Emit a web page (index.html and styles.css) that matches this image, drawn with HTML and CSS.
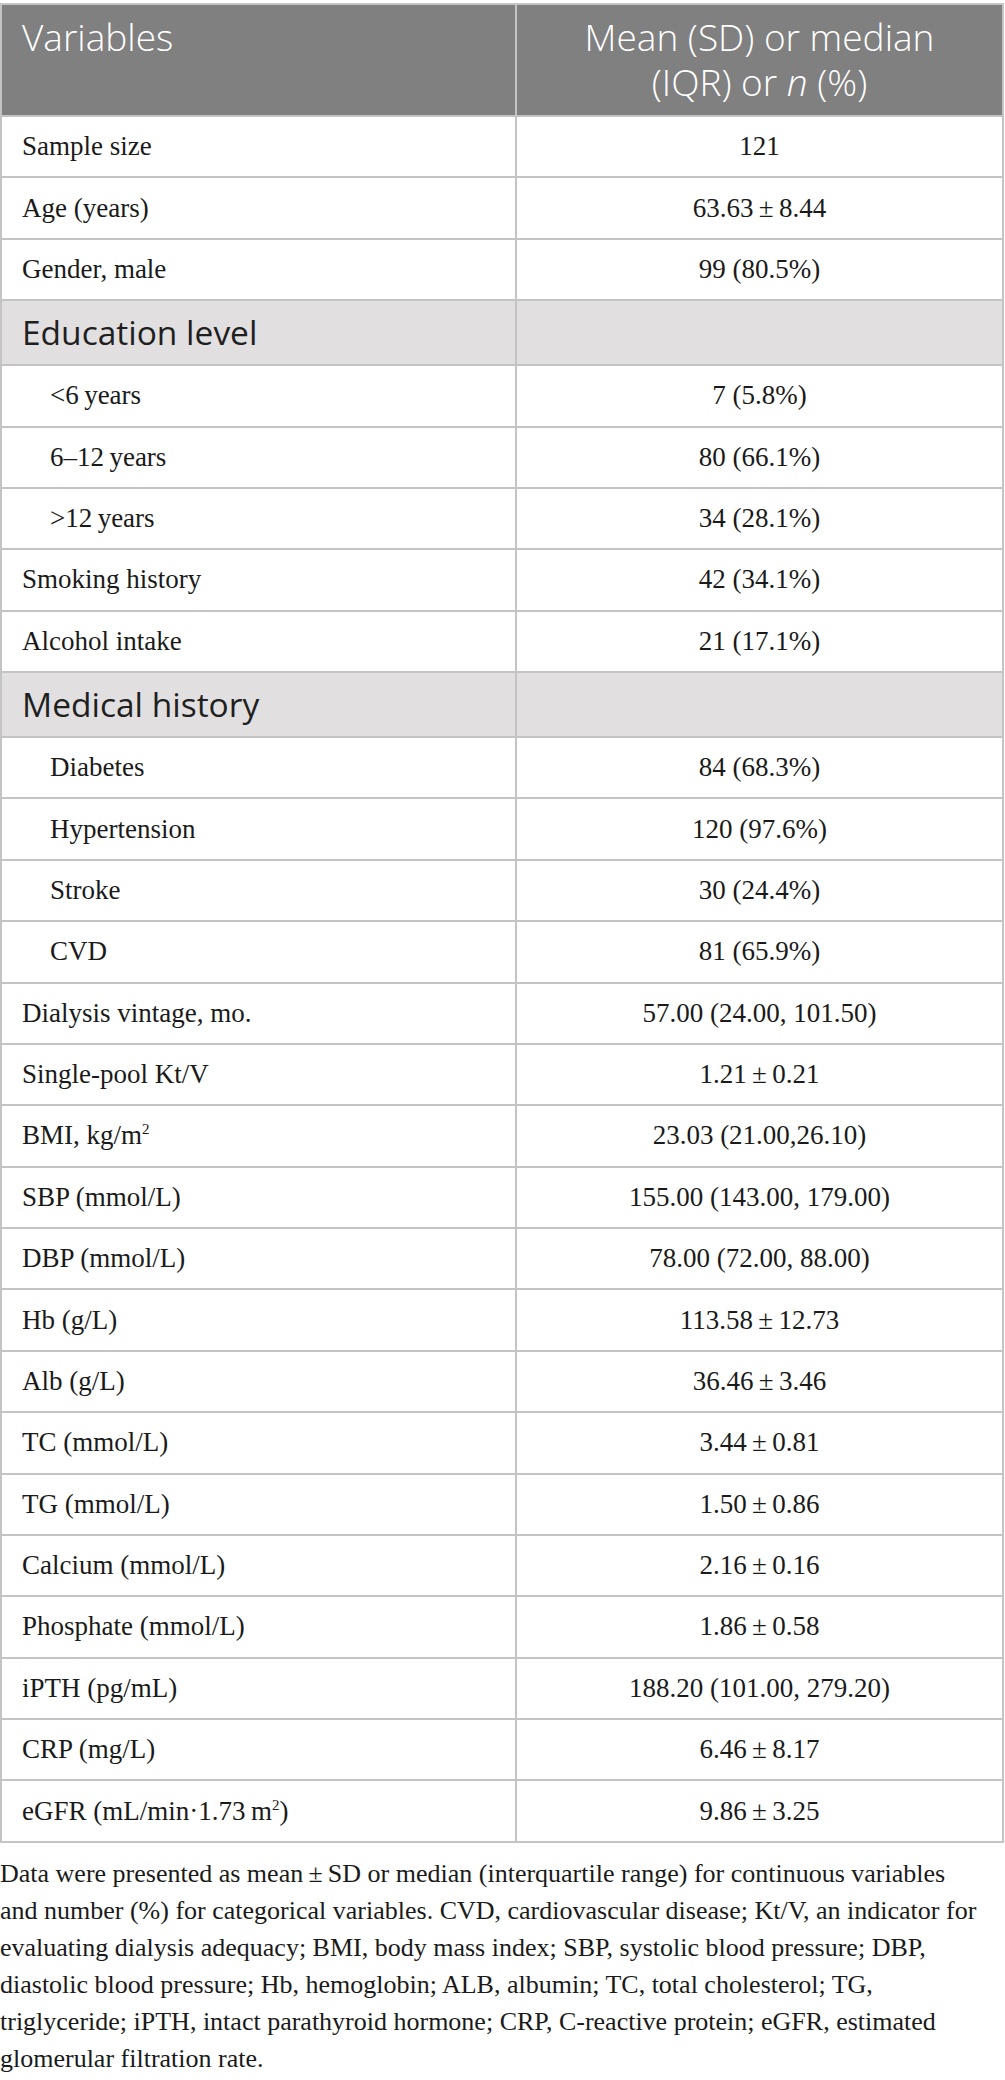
FILE: index.html
```html
<!DOCTYPE html>
<html lang="en">
<head>
    <meta charset="UTF-8">
    <meta name="viewport" content="width=device-width, initial-scale=1.0">
    <title>Baseline characteristics</title>
    <link rel="stylesheet" href="styles.css">
</head>
<body>
    <div class="table-wrap">
        <table class="data-table">
            <thead>
                <tr>
                    <th class="col-var">Variables</th>
                    <th class="col-val">Mean (SD) or median<br>(IQR) or <em>n</em> (%)</th>
                </tr>
            </thead>
            <tbody>
                <tr><td>Sample size</td><td>121</td></tr>
                <tr><td>Age (years)</td><td>63.63&thinsp;±&thinsp;8.44</td></tr>
                <tr><td>Gender, male</td><td>99 (80.5%)</td></tr>
                <tr class="section"><td>Education level</td><td></td></tr>
                <tr><td class="sub">&lt;6&thinsp;years</td><td>7 (5.8%)</td></tr>
                <tr><td class="sub">6–12&thinsp;years</td><td>80 (66.1%)</td></tr>
                <tr><td class="sub">&gt;12&thinsp;years</td><td>34 (28.1%)</td></tr>
                <tr><td>Smoking history</td><td>42 (34.1%)</td></tr>
                <tr><td>Alcohol intake</td><td>21 (17.1%)</td></tr>
                <tr class="section"><td>Medical history</td><td></td></tr>
                <tr><td class="sub">Diabetes</td><td>84 (68.3%)</td></tr>
                <tr><td class="sub">Hypertension</td><td>120 (97.6%)</td></tr>
                <tr><td class="sub">Stroke</td><td>30 (24.4%)</td></tr>
                <tr><td class="sub">CVD</td><td>81 (65.9%)</td></tr>
                <tr><td>Dialysis vintage, mo.</td><td>57.00 (24.00, 101.50)</td></tr>
                <tr><td>Single-pool Kt/V</td><td>1.21&thinsp;±&thinsp;0.21</td></tr>
                <tr><td>BMI, kg/m<sup>2</sup></td><td>23.03 (21.00,26.10)</td></tr>
                <tr><td>SBP (mmol/L)</td><td>155.00 (143.00, 179.00)</td></tr>
                <tr><td>DBP (mmol/L)</td><td>78.00 (72.00, 88.00)</td></tr>
                <tr><td>Hb (g/L)</td><td>113.58&thinsp;±&thinsp;12.73</td></tr>
                <tr><td>Alb (g/L)</td><td>36.46&thinsp;±&thinsp;3.46</td></tr>
                <tr><td>TC (mmol/L)</td><td>3.44&thinsp;±&thinsp;0.81</td></tr>
                <tr><td>TG (mmol/L)</td><td>1.50&thinsp;±&thinsp;0.86</td></tr>
                <tr><td>Calcium (mmol/L)</td><td>2.16&thinsp;±&thinsp;0.16</td></tr>
                <tr><td>Phosphate (mmol/L)</td><td>1.86&thinsp;±&thinsp;0.58</td></tr>
                <tr><td>iPTH (pg/mL)</td><td>188.20 (101.00, 279.20)</td></tr>
                <tr><td>CRP (mg/L)</td><td>6.46&thinsp;±&thinsp;8.17</td></tr>
                <tr><td>eGFR (mL/min·1.73&thinsp;m<sup>2</sup>)</td><td>9.86&thinsp;±&thinsp;3.25</td></tr>
            </tbody>
        </table>
        <p class="footnote">Data were presented as mean&thinsp;±&thinsp;SD or median (interquartile range) for continuous variables<br>and number (%) for categorical variables. CVD, cardiovascular disease; Kt/V, an indicator for evaluating dialysis adequacy; BMI, body mass index; SBP, systolic blood pressure; DBP, diastolic blood pressure; Hb, hemoglobin; ALB, albumin; TC, total cholesterol; TG, triglyceride; iPTH, intact parathyroid hormone; CRP, C-reactive protein; eGFR, estimated glomerular filtration rate.</p>
    </div>
</body>
</html>
```

FILE: styles.css
```css
body {
    margin: 0;
    background-color: #ffffff;
    font-family: 'Liberation Serif', 'Times New Roman', serif;
    color: #1a1a1a;
}

.table-wrap {
    width: 1005px;
    padding-top: 3px;
}

.data-table {
    width: 1004px;
    border-collapse: collapse;
    table-layout: fixed;
}

.data-table th,
.data-table td {
    border: 2px solid #c4c4c4;
    box-sizing: border-box;
}

.col-var {
    width: 515px;
}

.data-table th {
    background-color: #7f807f;
    color: #ffffff;
    font-family: 'Open Sans', 'Liberation Sans', sans-serif;
    font-weight: 300;
    font-size: 37px;
    line-height: 45px;
    padding: 9px 20px 11px;
    vertical-align: top;
}

.data-table th.col-var {
    text-align: left;
}

.data-table th.col-val {
    text-align: center;
}

.data-table td {
    font-size: 27px;
    line-height: 33px;
    padding: 13.2px 20px;
}

.data-table td:first-child {
    text-align: left;
}

.data-table td:last-child {
    text-align: center;
}

.data-table td.sub {
    padding-left: 48px;
}

.data-table sup {
    font-size: 15px;
    line-height: 0;
    vertical-align: 10px;
}

.data-table tr.section td {
    background-color: #e1dfe0;
    font-family: 'Open Sans', 'Liberation Sans', sans-serif;
    font-size: 33.5px;
    line-height: 37px;
    padding: 13px 20px;
    color: #1f1f1f;
}

.footnote {
    margin: 12px 0 0;
    font-size: 26px;
    line-height: 37px;
    color: #1a1a1a;
}
```
